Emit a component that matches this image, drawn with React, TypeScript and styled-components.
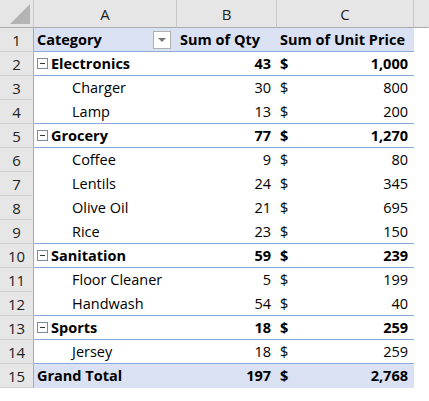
import React from "react";
import styled, { createGlobalStyle } from "styled-components";

const G = createGlobalStyle`
  body { margin: 0; background: #fff; font-family: "Open Sans", "Liberation Sans", sans-serif; }
`;

const Sheet = styled.div`
  display: grid;
  grid-template-columns: 34px 143px 100px 137px 15px;
  grid-auto-rows: 24px;
  grid-template-rows: 28px;
  width: 429px;
`;

const ColHead = styled.div<{ $last?: boolean }>`
  background: #e6e6e6;
  border-right: 1px solid ${p => (p.$last ? "transparent" : "#c8c8c8")};
  border-bottom: 1px solid #ababab;
  display: flex; align-items: center; justify-content: center;
  font-size: 15px; color: #222;
  box-sizing: border-box;
`;

const Corner = styled(ColHead)`
  position: relative;
  &::after {
    content: ""; position: absolute; right: 3px; bottom: 3px;
    border-left: 20px solid transparent; border-bottom: 20px solid #b4b4b4;
  }
`;

const RowNum = styled.div`
  background: #e6e6e6;
  border-right: 1px solid #ababab;
  border-bottom: 1px solid #d0d0d0;
  display: flex; align-items: center; justify-content: center;
  font-size: 15px; color: #222; box-sizing: border-box;
`;

const Cell = styled.div<{ $bg?: boolean; $line?: boolean; $bold?: boolean; $align?: string; $pad?: number }>`
  background: ${p => (p.$bg ? "#d9e1f2" : "#fff")};
  border-bottom: 1px solid ${p => (p.$line ? "#8ea9db" : "transparent")};
  display: flex; align-items: center;
  justify-content: ${p => p.$align || "flex-start"};
  padding: 0 6px 0 ${p => p.$pad ?? 3}px;
  font-size: 14.5px; font-weight: ${p => (p.$bold ? 700 : 400)};
  color: #000; box-sizing: border-box; white-space: nowrap; overflow: hidden;
`;

const Blank = styled.div``;

const Minus = styled.span`
  width: 9px; height: 9px; border: 1px solid #7a8aa8; margin-right: 3px;
  display: inline-flex; align-items: center; justify-content: center; position: relative;
  &::after { content: ""; width: 5px; height: 1px; background: #333; }
`;

const Drop = styled.span`
  margin-left: auto; width: 16px; height: 16px; border: 1px solid #b0b0b0; background: #fff;
  display: inline-flex; align-items: center; justify-content: center;
  &::after { content: ""; border-left: 4px solid transparent; border-right: 4px solid transparent; border-top: 4px solid #777; }
`;

const Money = styled.div`
  display: flex; justify-content: space-between; width: 100%;
`;

type Row = { kind: "head" | "group" | "item" | "total"; label: string; qty?: string; price?: string; line?: boolean };

const rows: Row[] = [
  { kind: "head", label: "Category", line: true },
  { kind: "group", label: "Electronics", qty: "43", price: "1,000", line: true },
  { kind: "item", label: "Charger", qty: "30", price: "800" },
  { kind: "item", label: "Lamp", qty: "13", price: "200", line: true },
  { kind: "group", label: "Grocery", qty: "77", price: "1,270", line: true },
  { kind: "item", label: "Coffee", qty: "9", price: "80" },
  { kind: "item", label: "Lentils", qty: "24", price: "345" },
  { kind: "item", label: "Olive Oil", qty: "21", price: "695" },
  { kind: "item", label: "Rice", qty: "23", price: "150", line: true },
  { kind: "group", label: "Sanitation", qty: "59", price: "239", line: true },
  { kind: "item", label: "Floor Cleaner", qty: "5", price: "199" },
  { kind: "item", label: "Handwash", qty: "54", price: "40", line: true },
  { kind: "group", label: "Sports", qty: "18", price: "259", line: true },
  { kind: "item", label: "Jersey", qty: "18", price: "259", line: true },
  { kind: "total", label: "Grand Total", qty: "197", price: "2,768" },
];

export default function App() {
  return (
    <>
      <G />
      <Sheet>
        <Corner />
        <ColHead>A</ColHead>
        <ColHead>B</ColHead>
        <ColHead>C</ColHead>
        <ColHead $last />
        {rows.map((r, i) => {
          const bg = r.kind === "head" || r.kind === "total";
          const bold = r.kind !== "item";
          return (
            <React.Fragment key={i}>
              <RowNum>{i + 1}</RowNum>
              <Cell $bg={bg} $line={r.line} $bold={bold} $pad={r.kind === "item" ? 38 : 3}>
                {r.kind === "group" && <Minus />}
                {r.label}
                {r.kind === "head" && <Drop />}
              </Cell>
              {r.kind === "head" ? (
                <>
                  <Cell $bg $line $bold>Sum of Qty</Cell>
                  <Cell $bg $line $bold>Sum of Unit Price</Cell>
                </>
              ) : (
                <>
                  <Cell $bg={bg} $line={r.line} $bold={bold} $align="flex-end">{r.qty}</Cell>
                  <Cell $bg={bg} $line={r.line} $bold={bold}>
                    <Money><span>$</span><span>{r.price}</span></Money>
                  </Cell>
                </>
              )}
              <Blank />
            </React.Fragment>
          );
        })}
      </Sheet>
    </>
  );
}
